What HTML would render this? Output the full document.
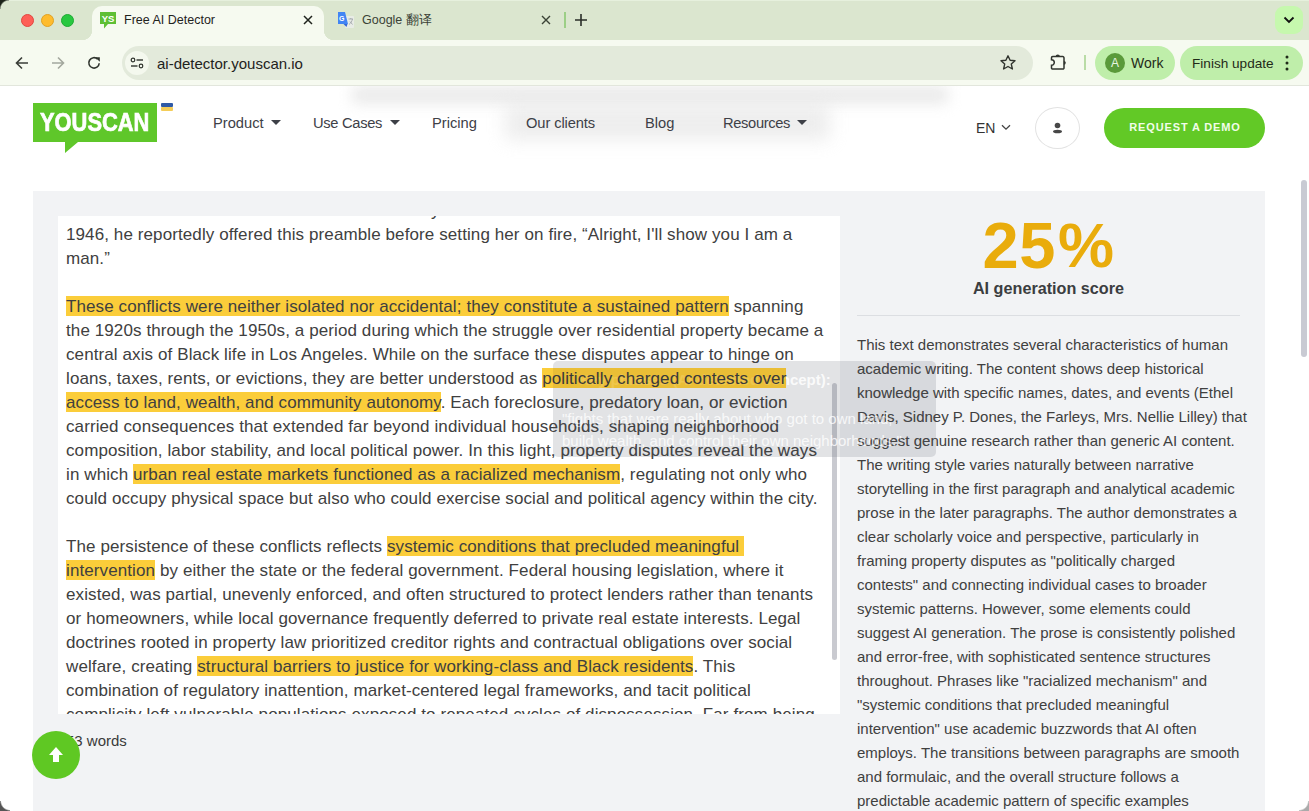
<!DOCTYPE html>
<html><head><meta charset="utf-8">
<style>
*{margin:0;padding:0;box-sizing:border-box}
html,body{width:1309px;height:811px;overflow:hidden;background:#fff;font-family:"Liberation Sans",sans-serif;color:#3a3a3a}
.abs{position:absolute}
#tabbar{position:absolute;left:0;top:0;width:1309px;height:40px;background:#dbe6cf}
#addr{position:absolute;left:0;top:40px;width:1309px;height:46px;background:#f6faf0;border-bottom:1px solid #e2e6dc}
#page{position:absolute;left:0;top:86px;width:1309px;height:725px;background:#fff;overflow:hidden}
.dot{position:absolute;width:13px;height:13px;border-radius:50%;top:13.5px}
#tab1{position:absolute;left:92px;top:6px;width:232px;height:34px;background:#f6faf0;border-radius:10px 10px 0 0}
#tab1:before,#tab1:after{content:"";position:absolute;bottom:0;width:10px;height:10px}
#tab1:before{left:-10px;background:radial-gradient(circle at 0 0,transparent 10px,#f6faf0 10.5px)}
#tab1:after{right:-10px;background:radial-gradient(circle at 100% 0,transparent 10px,#f6faf0 10.5px)}
.tabtitle{position:absolute;font-size:12.5px;color:#1f231d;top:13px;line-height:14px}
#omni{position:absolute;left:122px;top:6px;width:911px;height:34px;border-radius:17px;background:#e3eadb}
.nav{position:absolute;top:29px;font-size:14.7px;color:#3d4047;line-height:16px}
.caret{position:absolute;width:0;height:0;border-left:5px solid transparent;border-right:5px solid transparent;border-top:5px solid #3d4047}
#panel{position:absolute;left:33px;top:105px;width:1232px;height:640px;background:#f2f3f5}
#ta{position:absolute;left:25px;top:25px;width:782px;height:498px;background:#fff;overflow:hidden}
#tatext{position:absolute;left:8px;top:-17px;width:770px;font-size:17px;line-height:24px;color:#404040;white-space:nowrap;letter-spacing:0.1px}
#tatext p{margin-bottom:24px}
.hl{background:#fbcd3a;padding:1px 0 0}
.dupta p{margin-bottom:24px}
.dupta .hl{background:rgba(236,190,52,0.85);color:#3a3a3a}
#rtext{position:absolute;left:824px;top:142px;width:400px;font-size:15px;line-height:24px;color:#404040;white-space:nowrap}
</style></head><body>
<div id="tabbar">
  <div class="abs" style="left:0;top:0;width:1309px;height:1px;background:#e6f0dd"></div>
  <div class="dot" style="left:21px;background:#fe5f57;border:0.5px solid #e2463f"></div>
  <div class="dot" style="left:41px;background:#febc2e;border:0.5px solid #e1a123"></div>
  <div class="dot" style="left:61px;background:#28c840;border:0.5px solid #1eaa33"></div>
  <div id="tab1"></div>
  <!-- favicon -->
  <svg class="abs" style="left:100px;top:12px" width="17" height="17" viewBox="0 0 17 17">
    <path d="M0 0H16V12H8L4 16.5V12H0Z" fill="#5ebf35"/>
    <text x="8" y="10" font-family="Liberation Sans" font-weight="bold" font-size="9.5" fill="#fff" text-anchor="middle">YS</text>
  </svg>
  <div class="tabtitle" style="left:124px">Free AI Detector</div>
  <svg class="abs" style="left:303px;top:15px" width="10" height="10" viewBox="0 0 10 10"><path d="M1 1L9 9M9 1L1 9" stroke="#1f231d" stroke-width="1.5"/></svg>
  <!-- google translate icon -->
  <svg class="abs" style="left:337px;top:11px" width="18" height="18" viewBox="0 0 18 18">
    <rect x="8" y="5" width="9" height="12" rx="1" fill="#e8ece6"/>
    <path d="M1 1H8L11 13H1Z" fill="#4285f4"/>
    <path d="M6.5 13L9.5 16L10.5 13Z" fill="#3367d6"/>
    <text x="4.8" y="9.5" font-family="Liberation Sans" font-weight="bold" font-size="7" fill="#fff" text-anchor="middle">G</text>
    <path d="M11.5 8H16M13.8 7V8M12 13.5C14 12 15 10 15.5 8M13 10.5L15.5 13.5" stroke="#9aa0a6" stroke-width="0.8" fill="none"/>
  </svg>
  <div class="tabtitle" style="left:362px;color:#3a4236">Google 翻译</div>
  <svg class="abs" style="left:541px;top:15px" width="10" height="10" viewBox="0 0 10 10"><path d="M1 1L9 9M9 1L1 9" stroke="#3a4236" stroke-width="1.4"/></svg>
  <div class="abs" style="left:564px;top:12px;width:1.5px;height:16px;background:#9ccf86"></div>
  <svg class="abs" style="left:574px;top:13px" width="14" height="14" viewBox="0 0 14 14"><path d="M7 1V13M1 7H13" stroke="#2a2e28" stroke-width="1.6"/></svg>
  <div class="abs" style="left:1275px;top:6px;width:28px;height:28px;border-radius:9px;background:#c6f8ae"></div>
  <svg class="abs" style="left:1283px;top:16px" width="12" height="8" viewBox="0 0 12 8"><path d="M1.5 1.5L6 6L10.5 1.5" stroke="#111" stroke-width="1.8" fill="none"/></svg>
</div>
<div id="addr">
  <svg class="abs" style="left:14px;top:15px" width="16" height="16" viewBox="0 0 16 16"><path d="M14 8H3M8 2.5L2.5 8L8 13.5" stroke="#3a3e38" stroke-width="1.6" fill="none"/></svg>
  <svg class="abs" style="left:50px;top:15px" width="16" height="16" viewBox="0 0 16 16"><path d="M2 8H13M8 2.5L13.5 8L8 13.5" stroke="#a3a89e" stroke-width="1.6" fill="none"/></svg>
  <svg class="abs" style="left:87px;top:16px" width="14" height="14" viewBox="0 0 14 14"><path d="M12.2 7.2A5.2 5.2 0 1 1 10.6 3.1" stroke="#30342e" stroke-width="1.6" fill="none"/><path d="M8.2 1.2H12.8V5.8Z" fill="#30342e"/></svg>
  <div id="omni"></div>
  <div class="abs" style="left:125px;top:11px;width:24px;height:24px;border-radius:12px;background:#f4f8ee"></div>
  <svg class="abs" style="left:130px;top:16px" width="14" height="14" viewBox="0 0 14 14">
    <circle cx="3" cy="4" r="1.8" stroke="#2f332d" stroke-width="1.2" fill="none"/><path d="M6.5 4H13" stroke="#2f332d" stroke-width="1.4"/>
    <circle cx="11" cy="10" r="1.8" stroke="#2f332d" stroke-width="1.2" fill="none"/><path d="M1 10H7.5" stroke="#2f332d" stroke-width="1.4"/>
  </svg>
  <div class="abs" style="left:157px;top:15px;font-size:15px;line-height:17px;color:#1f231d">ai-detector.youscan.io</div>
  <svg class="abs" style="left:999px;top:14px" width="18" height="18" viewBox="0 0 18 18"><path d="M9 1.8L11.1 6.3L16 6.8L12.3 10.1L13.4 15L9 12.5L4.6 15L5.7 10.1L2 6.8L6.9 6.3Z" stroke="#30342e" stroke-width="1.4" fill="none" stroke-linejoin="round"/></svg>
  <svg class="abs" style="left:1049px;top:12px" width="20" height="20" viewBox="0 0 20 20"><path d="M3.7 4.6H13.8A1.2 1.2 0 0 1 15 5.8V15.9A1.2 1.2 0 0 1 13.8 17.1H3.7A1.2 1.2 0 0 1 2.5 15.9V13.3A2.8 2.8 0 0 0 2.5 7.7V5.8A1.2 1.2 0 0 1 3.7 4.6Z" stroke="#30342e" stroke-width="1.5" fill="none"/><path d="M6.6 4.7A2.15 2.15 0 0 1 10.9 4.7Z" fill="#30342e"/><path d="M14.9 8.9A1.9 1.9 0 0 1 14.9 12.7Z" fill="#30342e"/></svg>
  <div class="abs" style="left:1084px;top:15px;width:1.5px;height:15px;background:#b9dca6"></div>
  <div class="abs" style="left:1095px;top:6px;width:80px;height:34px;border-radius:17px;background:#bfeeaa"></div>
  <div class="abs" style="left:1105px;top:13px;width:20px;height:20px;border-radius:10px;background:#5a9a3a;color:#e8f5e0;font-size:12px;line-height:20px;text-align:center">A</div>
  <div class="abs" style="left:1131px;top:15px;font-size:14px;line-height:17px;color:#1f2a18">Work</div>
  <div class="abs" style="left:1180px;top:6px;width:123px;height:34px;border-radius:17px;background:#bfeeaa"></div>
  <div class="abs" style="left:1192px;top:15px;font-size:13.6px;line-height:17px;color:#1f2a18">Finish update</div>
  <svg class="abs" style="left:1283px;top:14px" width="8" height="18" viewBox="0 0 8 18"><circle cx="4" cy="3" r="1.5" fill="#1f2a18"/><circle cx="4" cy="9" r="1.5" fill="#1f2a18"/><circle cx="4" cy="15" r="1.5" fill="#1f2a18"/></svg>
</div>
<div id="page">
  <!-- ghost blur -->
  <div class="abs" style="left:352px;top:0px;width:596px;height:18px;background:#d6d6d6;filter:blur(7px);opacity:0.5"></div>
  <div class="abs" style="left:505px;top:20px;width:325px;height:34px;background:#d8d8d8;filter:blur(9px);opacity:0.45"></div>
  <!-- logo -->
  <svg class="abs" style="left:33px;top:17px" width="142" height="50" viewBox="0 0 142 50">
    <path d="M0 0H124V39H45L32 50V39H0Z" fill="#5fc72a"/>
    <rect x="128" y="0" width="12" height="4" rx="1" fill="#2f5aa6"/>
    <rect x="128" y="4" width="12" height="4" rx="1" fill="#f4cd58"/>
  </svg>
  <div class="abs" style="left:40px;top:23px;font-size:25px;font-weight:bold;color:#fff;line-height:26px;transform:scaleX(0.875);transform-origin:0 0;letter-spacing:0;-webkit-text-stroke:0.7px #fff">YOUSCAN</div>
  <div class="nav" style="left:213px">Product</div><div class="caret" style="left:271px;top:34px"></div>
  <div class="nav" style="left:313px;letter-spacing:-0.3px">Use Cases</div><div class="caret" style="left:390px;top:34px"></div>
  <div class="nav" style="left:432px">Pricing</div>
  <div class="nav" style="left:526px;letter-spacing:-0.1px">Our clients</div>
  <div class="nav" style="left:645px">Blog</div>
  <div class="nav" style="left:723px;letter-spacing:-0.35px">Resources</div><div class="caret" style="left:797px;top:34px"></div>
  <div class="abs" style="left:976px;top:34px;font-size:14px;line-height:16px;color:#333">EN</div>
  <svg class="abs" style="left:1001px;top:38px" width="10" height="7" viewBox="0 0 10 7"><path d="M1 1.2L5 5.2L9 1.2" stroke="#444" stroke-width="1.3" fill="none"/></svg>
  <div class="abs" style="left:1035px;top:21px;width:45px;height:42px;border-radius:50%;border:1px solid #e2e2e2;background:#fff"></div>
  <svg class="abs" style="left:1051px;top:35px" width="13" height="14" viewBox="0 0 13 14"><circle cx="6.5" cy="4.5" r="2.8" fill="#474747"/><ellipse cx="6.5" cy="10.5" rx="4.5" ry="1.8" fill="#474747"/></svg>
  <div class="abs" style="left:1104px;top:22px;width:161px;height:40px;border-radius:20px;background:#62c926"></div>
  <div class="abs" style="left:1104px;top:35px;width:161px;text-align:center;font-size:11px;font-weight:bold;letter-spacing:0.85px;line-height:13px;color:#f1fde9;padding-left:1px">REQUEST A DEMO</div>

  <div id="panel">
    <div id="ta"><div id="tatext">
<p><span style="display:inline-block;width:365px"></span>y<br>1946, he reportedly offered this preamble before setting her on fire, “Alright, I'll show you I am a<br>man.”</p>
<p><span class="hl">These conflicts were neither isolated nor accidental; they constitute a sustained pattern</span> spanning<br>the 1920s through the 1950s, a period during which the struggle over residential property became a<br>central axis of Black life in Los Angeles. While on the surface these disputes appear to hinge on<br>loans, taxes, rents, or evictions, they are better understood as <span class="hl">politically charged contests over</span><br><span class="hl">access to land, wealth, and community autonomy</span>. Each foreclosure, predatory loan, or eviction<br>carried consequences that extended far beyond individual households, shaping neighborhood<br>composition, labor stability, and local political power. In this light, property disputes reveal the ways<br>in which <span class="hl">urban real estate markets functioned as a racialized mechanism</span>, regulating not only who<br>could occupy physical space but also who could exercise social and political agency within the city.</p>
<p>The persistence of these conflicts reflects <span class="hl">systemic conditions that precluded meaningful&nbsp;</span><br><span class="hl">intervention</span> by either the state or the federal government. Federal housing legislation, where it<br>existed, was partial, unevenly enforced, and often structured to protect lenders rather than tenants<br>or homeowners, while local governance frequently deferred to private real estate interests. Legal<br>doctrines rooted in property law prioritized creditor rights and contractual obligations over social<br>welfare, creating <span class="hl">structural barriers to justice for working-class and Black residents</span>. This<br>combination of regulatory inattention, market-centered legal frameworks, and tacit political<br>complicity left vulnerable populations exposed to repeated cycles of dispossession. Far from being</p>
    </div>
    <div class="abs" style="left:774px;top:167px;width:5px;height:277px;border-radius:3px;background:#c9cad0"></div>
    </div>
    <div class="abs" style="left:33px;top:541px;font-size:15px;line-height:17px;color:#3a3a3a">53 words</div>
    <div class="abs" style="left:-1px;top:540px;width:48px;height:48px;border-radius:50%;background:#5fc823"></div>
    <svg class="abs" style="left:15px;top:555px" width="16" height="18" viewBox="0 0 16 18"><path d="M8 1L1 9H5V16H11V9H15Z" fill="#fff"/></svg>

    <div class="abs" style="left:824px;top:19px;width:383px;text-align:center;font-size:65px;font-weight:bold;line-height:72px;color:#e9ac0c;letter-spacing:0.5px">25<span style="font-size:63px;margin-left:2px;position:relative;top:-1px">%</span></div>
    <div class="abs" style="left:824px;top:88px;width:383px;text-align:center;font-size:16.2px;font-weight:bold;line-height:18px;color:#3b3d40">AI generation score</div>
    <div class="abs" style="left:824px;top:124px;width:383px;height:1px;background:#dcdee2"></div>
    <div id="rtext">This text demonstrates several characteristics of human<br>academic writing. The content shows deep historical<br>knowledge with specific names, dates, and events (Ethel<br>Davis, Sidney P. Dones, the Farleys, Mrs. Nellie Lilley) that<br>suggest genuine research rather than generic AI content.<br>The writing style varies naturally between narrative<br>storytelling in the first paragraph and analytical academic<br>prose in the later paragraphs. The author demonstrates a<br>clear scholarly voice and perspective, particularly in<br>framing property disputes as "politically charged<br>contests" and connecting individual cases to broader<br>systemic patterns. However, some elements could<br>suggest AI generation. The prose is consistently polished<br>and error-free, with sophisticated sentence structures<br>throughout. Phrases like "racialized mechanism" and<br>"systemic conditions that precluded meaningful<br>intervention" use academic buzzwords that AI often<br>employs. The transitions between paragraphs are smooth<br>and formulaic, and the overall structure follows a<br>predictable academic pattern of specific examples</div>
  </div>
  
  <!-- tooltip overlay -->
  <div class="abs" style="left:553px;top:275px;width:383px;height:96px;border-radius:5px;background:rgba(110,115,125,0.2);z-index:5"></div>
  <div class="abs" style="left:579px;top:285px;font-size:15px;font-weight:bold;line-height:18px;color:rgba(255,255,255,0.85);z-index:6;white-space:nowrap">Key phrases (AI-detected concept):</div>
  <div class="abs" style="left:562px;top:322px;font-size:15px;line-height:22px;color:rgba(255,255,255,0.8);z-index:6;white-space:nowrap">"fights that were really about who got to own land,<br>build wealth, and control their own neighborhoods."</div>

  <div class="abs" style="left:553px;top:275px;width:383px;height:96px;overflow:hidden;z-index:7">
    <div style="position:absolute;left:-487px;top:-162px;width:770px;font-size:17px;line-height:24px;color:rgba(58,58,58,0.35);white-space:nowrap;letter-spacing:0.1px" class="dupta">
<p><span style="display:inline-block;width:365px"></span>y<br>1946, he reportedly offered this preamble before setting her on fire, “Alright, I'll show you I am a<br>man.”</p>
<p><span class="hl">These conflicts were neither isolated nor accidental; they constitute a sustained pattern</span> spanning<br>the 1920s through the 1950s, a period during which the struggle over residential property became a<br>central axis of Black life in Los Angeles. While on the surface these disputes appear to hinge on<br>loans, taxes, rents, or evictions, they are better understood as <span class="hl">politically charged contests over</span><br><span class="hl">access to land, wealth, and community autonomy</span>. Each foreclosure, predatory loan, or eviction<br>carried consequences that extended far beyond individual households, shaping neighborhood<br>composition, labor stability, and local political power. In this light, property disputes reveal the ways<br>in which <span class="hl">urban real estate markets functioned as a racialized mechanism</span>, regulating not only who<br>could occupy physical space but also who could exercise social and political agency within the city.</p>
<p>The persistence of these conflicts reflects <span class="hl">systemic conditions that precluded meaningful&nbsp;</span><br><span class="hl">intervention</span> by either the state or the federal government. Federal housing legislation, where it<br>existed, was partial, unevenly enforced, and often structured to protect lenders rather than tenants<br>or homeowners, while local governance frequently deferred to private real estate interests. Legal<br>doctrines rooted in property law prioritized creditor rights and contractual obligations over social<br>welfare, creating <span class="hl">structural barriers to justice for working-class and Black residents</span>. This<br>combination of regulatory inattention, market-centered legal frameworks, and tacit political<br>complicity left vulnerable populations exposed to repeated cycles of dispossession. Far from being</p>
    </div>
    <div style="position:absolute;left:304px;top:-28px;font-size:15px;line-height:24px;color:rgba(60,60,60,0.35);white-space:nowrap">This text demonstrates several characteristics of human<br>academic writing. The content shows deep historical<br>knowledge with specific names, dates, and events (Ethel<br>Davis, Sidney P. Dones, the Farleys, Mrs. Nellie Lilley) that<br>suggest genuine research rather than generic AI content.<br>The writing style varies naturally between narrative<br>storytelling in the first paragraph and analytical academic<br>prose in the later paragraphs. The author demonstrates a<br>clear scholarly voice and perspective, particularly in<br>framing property disputes as "politically charged<br>contests" and connecting individual cases to broader<br>systemic patterns. However, some elements could<br>suggest AI generation. The prose is consistently polished<br>and error-free, with sophisticated sentence structures<br>throughout. Phrases like "racialized mechanism" and<br>"systemic conditions that precluded meaningful<br>intervention" use academic buzzwords that AI often<br>employs. The transitions between paragraphs are smooth<br>and formulaic, and the overall structure follows a<br>predictable academic pattern of specific examples</div>
  </div>
  <!-- page scrollbar -->
  <div class="abs" style="left:1301px;top:94px;width:6px;height:177px;border-radius:3px;background:#c9cad3"></div>
</div>
<div class="abs" style="left:0;top:0;width:9px;height:9px;z-index:20;background:radial-gradient(circle at 9px 9px,transparent 8px,#1c2319 9.5px)"></div>
<div class="abs" style="left:0;top:801px;width:10px;height:10px;z-index:20;background:radial-gradient(circle at 10px 0,transparent 8.5px,#555 10px)"></div>
<div class="abs" style="left:1299px;top:801px;width:10px;height:10px;z-index:20;background:radial-gradient(circle at 0 0,transparent 8.5px,#aaa 10px)"></div>
</body></html>
